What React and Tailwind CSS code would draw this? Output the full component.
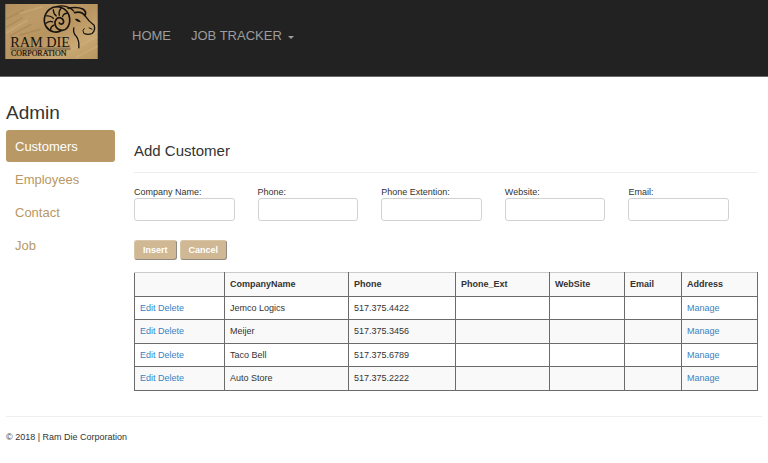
const links = ["Customers", "Employees", "Contact", "Job"];

const fields = [
  { id: "company", label: "Company Name:", type: "text" },
  { id: "phone", label: "Phone:", type: "tel" },
  { id: "extension", label: "Phone Extention:", type: "text" },
  { id: "website", label: "Website:", type: "text" },
  { id: "email", label: "Email:", type: "email" },
];

const customers = [
  { name: "Jemco Logics", phone: "517.375.4422" },
  { name: "Meijer", phone: "517.375.3456" },
  { name: "Taco Bell", phone: "517.375.6789" },
  { name: "Auto Store", phone: "517.375.2222" },
];

const columns = [
  { title: "", width: "w-[90px]" },
  { title: "CompanyName", width: "w-[124px]" },
  { title: "Phone", width: "w-[107px]" },
  { title: "Phone_Ext", width: "w-[94px]" },
  { title: "WebSite", width: "w-[75px]" },
  { title: "Email", width: "w-[57px]" },
  { title: "Address", width: "w-[76px]" },
];

const cell = "border border-[#6b6b6b] px-[5px] py-0 text-left";

function Logo() {
  return (
    <svg viewBox="15 12 279 166" className="block h-[55px] w-[93px]" role="img" aria-label="Ram Die Corporation">
      <defs>
        <linearGradient id="wood" x1="0" y1="0" x2="1" y2="1">
          <stop offset="0" stopColor="#b1905f" />
          <stop offset="0.25" stopColor="#bd9b68" />
          <stop offset="0.5" stopColor="#b8945f" />
          <stop offset="0.75" stopColor="#c9a873" />
          <stop offset="1" stopColor="#b9975f" />
        </linearGradient>
      </defs>
      <rect x="15" y="12" width="279" height="166" fill="url(#wood)" />
      <g fill="none" strokeLinecap="round">
        <path d="M18 82 L66 54 M30 108 L92 74 M16 58 L70 30 M60 106 L120 88" stroke="#98784b" strokeWidth="5" opacity="0.35" />
        <path d="M20 98 L80 62 M60 40 L128 20 M216 150 L290 112 M230 172 L292 140" stroke="#d3b583" strokeWidth="6" opacity="0.4" />
      </g>
      <rect x="30" y="143" width="182" height="8" fill="#806b4c" opacity="0.7" />
      <g fill="none" stroke="#17130e" strokeLinecap="round" strokeLinejoin="round">
        <path d="M184 92 C170 102 148 96 138 80 C126 58 136 31 160 22 C184 15 206 31 209 54 C212 78 198 94 183 91 C166 88 160 68 170 57 C179 49 192 56 191 67 C190 74 181 75 178 69" strokeWidth="5" />
        <path d="M160 29 Q160 41 169 48 M140 48 Q151 46 160 55 M138 70 Q149 62 158 66 M151 90 Q153 79 162 76 M183 25 Q175 35 178 46 M202 40 Q191 40 188 50" strokeWidth="4" />
        <path d="M169 20 C190 14 212 21 221 33" strokeWidth="4" />
        <path d="M205 25 Q231 19 249 27 Q262 35 255 47 Q245 32 224 38" strokeWidth="5" />
        <path d="M256 48 Q267 65 283 76 Q288 91 277 101 Q265 106 253 101" strokeWidth="4" />
        <path d="M268 84 L277 88 M251 99 Q246 91 253 86" strokeWidth="3" />
        <path d="M222 84 Q218 98 229 109 Q239 123 237 144" strokeWidth="4" />
      </g>
      <path d="M225 57 Q237 54 243 67 Q232 67 225 57 Z" fill="#17130e" />
      <text x="30" y="141" fontSize="43" fill="#17130e" className="font-['Liberation_Serif',serif]">RAM DIE</text>
      <text x="32" y="168" fontSize="24" fill="#17130e" stroke="#17130e" strokeWidth="0.6" className="font-['Liberation_Serif',serif]">CORPORATION</text>
    </svg>
  );
}

export default function App() {
  return (
    <div className="min-h-screen bg-white font-['Liberation_Sans',Arial,sans-serif] text-[9px] leading-[13px] text-[#333]">
      <header className="flex h-[77px] items-start border-b border-[#6b6b6b] bg-[#222] pl-[5px] pt-1">
        <a href="#home">
          <Logo />
        </a>
        <nav className="ml-[34px] mt-[23px] flex gap-5 text-[13px] leading-[18px] text-[#9d9d9d]">
          <a href="#home">HOME</a>
          <button type="button" aria-haspopup="menu" className="flex items-center gap-[6px]">
            JOB TRACKER
            <span className="mt-[2px] border-x-3 border-t-3 border-x-transparent border-t-[#9d9d9d]" />
          </button>
        </nav>
      </header>

      <div className="px-[6px]">
        <h2 className="pt-6 text-[19px] leading-[24px]">Admin</h2>
        <div className="mt-[5px] flex items-start">
          <nav className="flex w-[109px] shrink-0 flex-col gap-px text-[13px]">
            {links.map((label, i) => (
              <a
                key={label}
                href={"#" + label.toLowerCase()}
                aria-current={i === 0 ? "page" : undefined}
                className={
                  "flex h-8 items-center rounded-[3px] px-[9px] " +
                  (i === 0 ? "bg-[#b89865] text-white" : "text-[#b89865]")
                }
              >
                {label}
              </a>
            ))}
          </nav>

          <main className="ml-[19px] mr-1 min-w-0 grow pt-[11px]">
            <h3 className="text-[15px] leading-[20px]">Add Customer</h3>
            <hr className="mt-[11px] border-[#eee]" />
            <form>
              <div className="mt-[13px] grid grid-cols-5 gap-x-[23px] pr-[29px]">
                {fields.map((f) => (
                  <div key={f.id}>
                    <label htmlFor={f.id} className="block leading-[12px]">
                      {f.label}
                    </label>
                    <input
                      id={f.id}
                      type={f.type}
                      className="block h-[23px] w-full rounded-[3px] border border-[#d2d2d2] bg-white px-2 outline-none"
                    />
                  </div>
                ))}
              </div>
              <div className="mt-[19px] flex gap-[3px]">
                {["Insert", "Cancel"].map((label) => (
                  <button
                    key={label}
                    type="button"
                    className="h-5 rounded-[3px] border border-b-[#8f8a80] border-l-[#d8c5a5] border-r-[#8f8a80] border-t-[#d8c5a5] bg-[#d0b894] px-2 font-bold text-white"
                  >
                    {label}
                  </button>
                ))}
              </div>
            </form>

            <table className="mt-3 w-full table-fixed border-collapse">
              <thead>
                <tr className="h-6 bg-[#f9f9f9]">
                  {columns.map((c) => (
                    <th key={c.title} scope="col" className={c.width + " border border-[#6b6b6b] border-t-[#ccc] px-[5px] py-0 text-left font-bold"}>
                      {c.title}
                    </th>
                  ))}
                </tr>
              </thead>
              <tbody>
                {customers.map((c) => (
                  <tr key={c.name} className="h-[23px] even:h-6 even:bg-[#f9f9f9]">
                    <td className={cell}>
                      <a href="#edit" className="text-[#3a82c4]">Edit</a>{" "}
                      <a href="#delete" className="text-[#3a82c4]">Delete</a>
                    </td>
                    <td className={cell}>{c.name}</td>
                    <td className={cell}>{c.phone}</td>
                    <td className={cell} />
                    <td className={cell} />
                    <td className={cell} />
                    <td className={cell}>
                      <a href="#manage" className="text-[#3a82c4]">Manage</a>
                    </td>
                  </tr>
                ))}
              </tbody>
            </table>
          </main>
        </div>

        <footer className="mt-[25px] border-t border-[#eee] pt-[14px]">
          <p>© 2018 | Ram Die Corporation</p>
        </footer>
      </div>
    </div>
  );
}
